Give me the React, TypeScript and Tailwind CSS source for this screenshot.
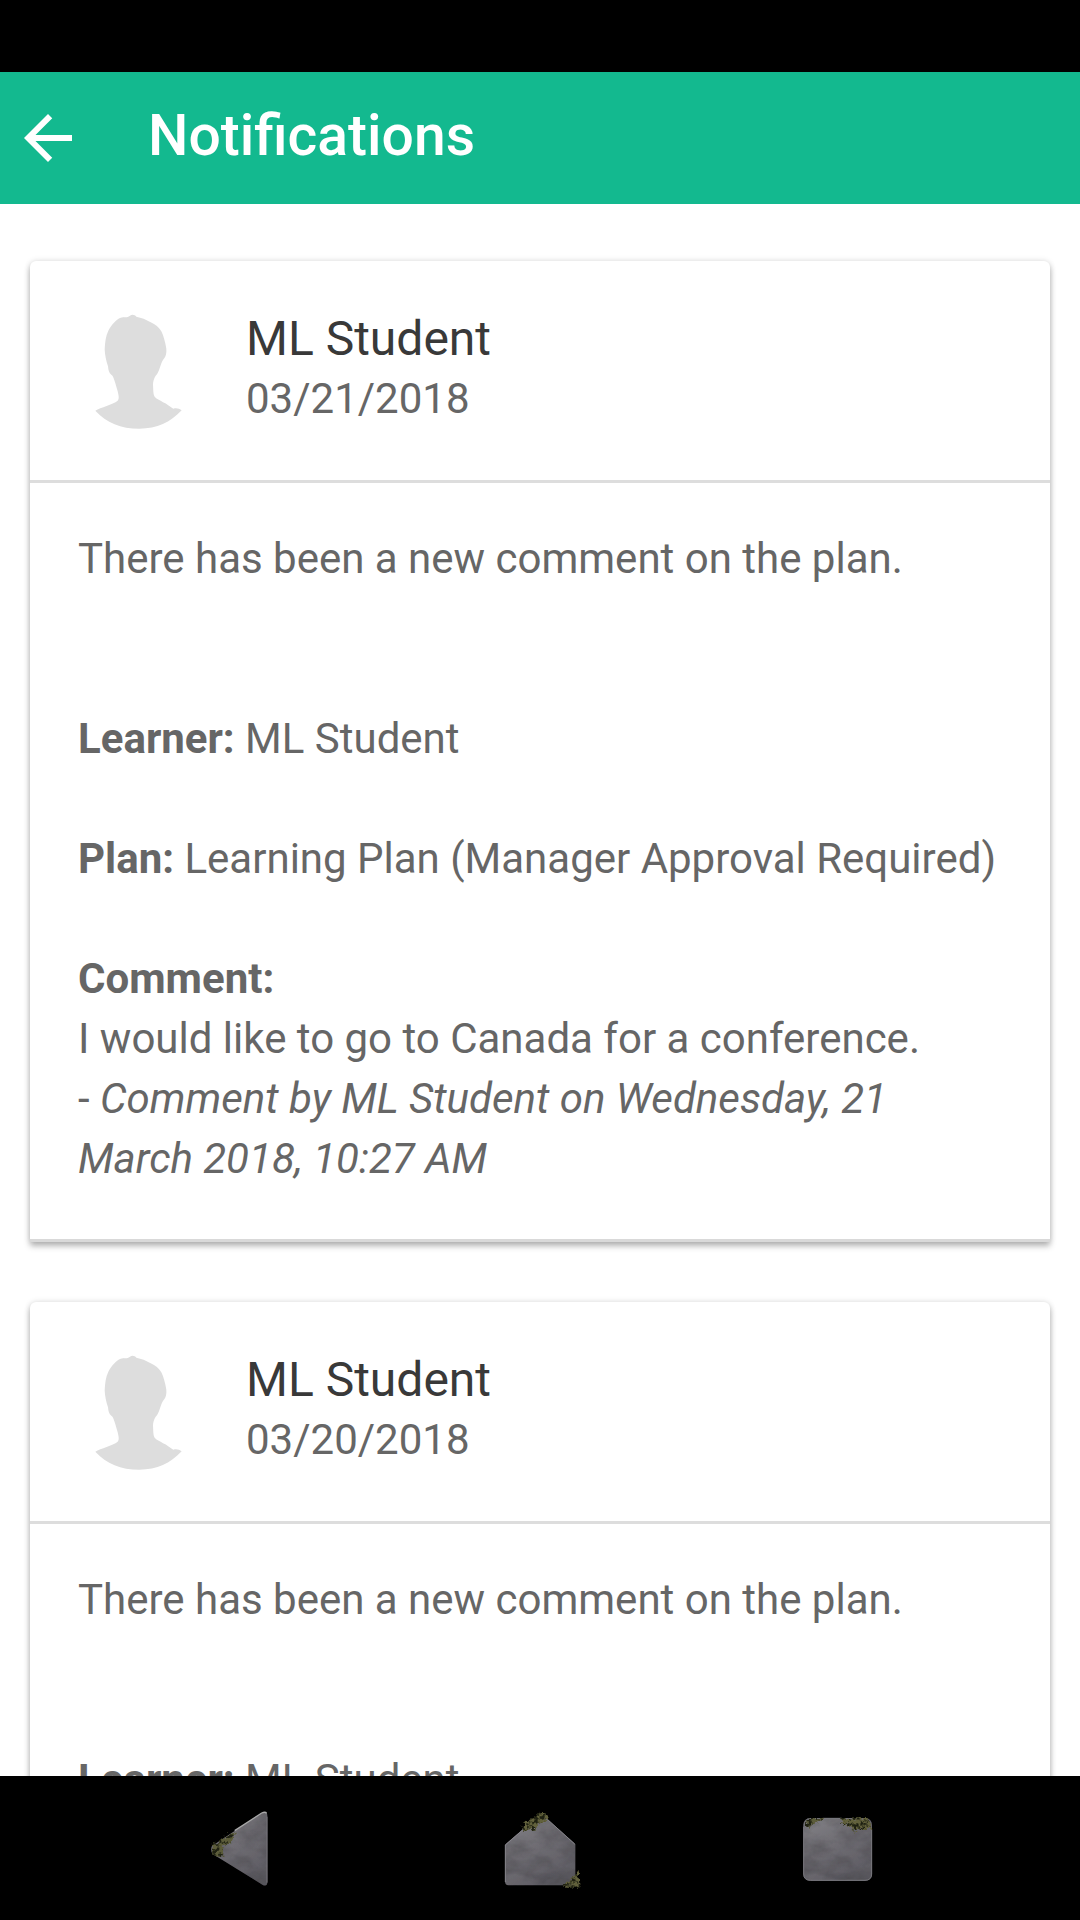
import type { ReactNode } from "react";

type Notification = {
  id: number;
  name: string;
  date: string;
};

const notifications: Notification[] = [
  { id: 1, name: "ML Student", date: "03/21/2018" },
  { id: 2, name: "ML Student", date: "03/20/2018" },
];

function Avatar() {
  return (
    <svg viewBox="24 57 360 360" className="size-[120px] shrink-0" aria-hidden="true">
      <path
        fill="#dddddd"
        d="M76 362C92 352 128 344 143 332C149 326 145 313 143 304L136 280C132 266 129 257 124 254C117 250 115 240 114 229C108 212 105 196 104 178C105 158 107 138 115 122C123 106 138 88 152 83C162 80 172 84 179 78C186 72 194 74 199 80C214 83 228 88 242 97C256 103 267 112 274 124C281 138 286 158 289 176C290 188 288 200 281 207C276 214 273 222 270 232C266 244 263 252 257 257C252 264 249 274 249 284C250 296 249 310 253 319C259 328 270 330 279 337C290 341 302 352 310 356C320 353 328 356 335 361C300 398 262 416 208 416C152 416 110 398 76 362Z"
      />
    </svg>
  );
}

function NotificationCard({ name, date }: { name: string; date: string }) {
  return (
    <article className="shrink-0 rounded-t-md border-b-[3px] border-[#d9d9d9] bg-white shadow-[0_4px_6px_rgba(0,0,0,0.28),0_0_6px_rgba(0,0,0,0.12)]">
      <header className="flex gap-12 border-b-[3px] border-[#dddddd] px-12 pt-12 pb-[51px]">
        <Avatar />
        <div className="min-w-0">
          <h2 className="text-[48px] leading-[60px] text-[#393939]">{name}</h2>
          <p>{date}</p>
        </div>
      </header>
      <div className="pt-[46px] pr-10 pb-[50px] pl-12">
        <p className="mb-[120px]">There has been a new comment on the plan.</p>
        <p className="mb-[60px]">
          <b>Learner:</b> ML Student
        </p>
        <p className="mb-[60px]">
          <b>Plan:</b> Learning Plan (Manager Approval Required)
        </p>
        <p>
          <b>Comment:</b>
        </p>
        <p>I would like to go to Canada for a conference.</p>
        <p>
          - <i>Comment by ML Student on Wednesday, 21 March 2018, 10:27 AM</i>
        </p>
      </div>
    </article>
  );
}

function NavButton({ label, children }: { label: string; children: ReactNode }) {
  return (
    <button type="button" aria-label={label} className="h-full w-[100px]">
      <svg viewBox="0 -42 300 432" className="h-full w-full" aria-hidden="true">
        {children}
      </svg>
    </button>
  );
}

// Shared gradients and textures for the stone navigation keys
function StoneDefs() {
  return (
    <svg className="absolute size-0" aria-hidden="true">
      <defs>
        <linearGradient id="stone" x1="0" y1="0" x2="0.6" y2="1">
          <stop offset="0" stopColor="#838287" />
          <stop offset="0.5" stopColor="#6f6d73" />
          <stop offset="1" stopColor="#5f5d64" />
        </linearGradient>
        <filter id="rough" x="-10%" y="-10%" width="120%" height="120%">
          <feTurbulence type="fractalNoise" baseFrequency="0.012 0.02" numOctaves="4" seed="7" result="noise" />
          <feColorMatrix in="noise" type="matrix" values="0 0 0 0 0  0 0 0 0 0  0 0 0 0 0  0.8 0 0 0 -0.28" result="shade" />
          <feComposite in="shade" in2="SourceAlpha" operator="in" result="cut" />
          <feMerge>
            <feMergeNode in="SourceGraphic" />
            <feMergeNode in="cut" />
          </feMerge>
        </filter>
        <filter id="moss" x="-20%" y="-20%" width="140%" height="140%" colorInterpolationFilters="sRGB">
          <feTurbulence type="fractalNoise" baseFrequency="0.09" numOctaves="3" seed="3" result="noise" />
          <feDisplacementMap in="SourceGraphic" in2="noise" scale="22" xChannelSelector="R" yChannelSelector="G" result="edge" />
          <feColorMatrix in="noise" type="matrix" values="0 0 0 0 0.12  0 0 0 0 0.13  0 0 0 0 0.07  5 0 0 0 -2.2" result="dark" />
          <feComposite in="dark" in2="edge" operator="in" result="spots" />
          <feMerge>
            <feMergeNode in="edge" />
            <feMergeNode in="spots" />
          </feMerge>
        </filter>
      </defs>
    </svg>
  );
}

export default function App() {
  return (
    <div className="flex h-screen flex-col overflow-hidden bg-white font-[Roboto,sans-serif] text-[42px] leading-[60px] text-[#666666]">
      <div className="h-[72px] shrink-0 bg-black" />

      <header className="flex h-[132px] shrink-0 items-center bg-[#13b98f] px-3 text-white">
        <button type="button" aria-label="Back" className="shrink-0">
          <svg viewBox="0 0 24 24" className="size-[72px]" fill="currentColor" aria-hidden="true">
            <path d="M20 11H7.83l5.59-5.59L12 4l-8 8 8 8 1.41-1.41L7.83 13H20v-2z" />
          </svg>
        </button>
        <h1 className="ml-16 pb-1 text-[57px] leading-[72px] font-medium">Notifications</h1>
      </header>

      <main className="flex min-h-0 flex-1 flex-col gap-[60px] overflow-hidden px-[30px] pt-[57px]">
        {notifications.map((n) => (
          <NotificationCard key={n.id} name={n.name} date={n.date} />
        ))}
      </main>

      <nav className="flex h-[144px] shrink-0 justify-center gap-[200px] bg-black">
        <StoneDefs />
        <NavButton label="Back">
          <path
            d="M66 168L215 69Q232 62 232 78V276Q232 292 217 284L68 192Q60 180 66 168Z"
            fill="url(#stone)"
            filter="url(#rough)"
          />
          <path d="M134 122L215 69Q226 64 230 70" fill="none" stroke="#a9a9a9" strokeWidth="4" />
          <path d="M231 80V278" stroke="#77757b" strokeWidth="3" />
          <path d="M66 168L132 124L134 136L122 160L96 166L104 200L92 204L66 188Z" fill="#5c5c3a" filter="url(#moss)" />
        </NavButton>
        <NavButton label="Home">
          <path
            d="M45 164L138 84Q152 70 168 84L256 162V276Q256 286 246 286H55Q45 286 45 274Z"
            fill="url(#stone)"
            filter="url(#rough)"
          />
          <path d="M46 276V165L100 118M170 86L254 162" fill="none" stroke="#85848a" strokeWidth="3" />
          <path d="M98 104L130 82L148 68L170 72L166 92L144 100L136 124L122 116L100 124Z" fill="#62613c" filter="url(#moss)" />
          <path d="M266 236L268 290L222 290L228 272L250 264Z" fill="#62613c" filter="url(#moss)" />
        </NavButton>
        <NavButton label="Recent apps">
          <rect x="40" y="84" width="206" height="188" rx="20" fill="url(#stone)" filter="url(#rough)" />
          <path d="M98 85H156M41 110V252Q41 271 62 271H225Q245 271 245 252V120" fill="none" stroke="#78777d" strokeWidth="3" />
          <path d="M46 96L66 84L98 84L100 94L74 98L56 114Z" fill="#5c5c3a" filter="url(#moss)" />
          <path d="M154 86L236 84L244 116L212 118L186 122L176 104L154 102Z" fill="#62613c" filter="url(#moss)" />
        </NavButton>
      </nav>
    </div>
  );
}
